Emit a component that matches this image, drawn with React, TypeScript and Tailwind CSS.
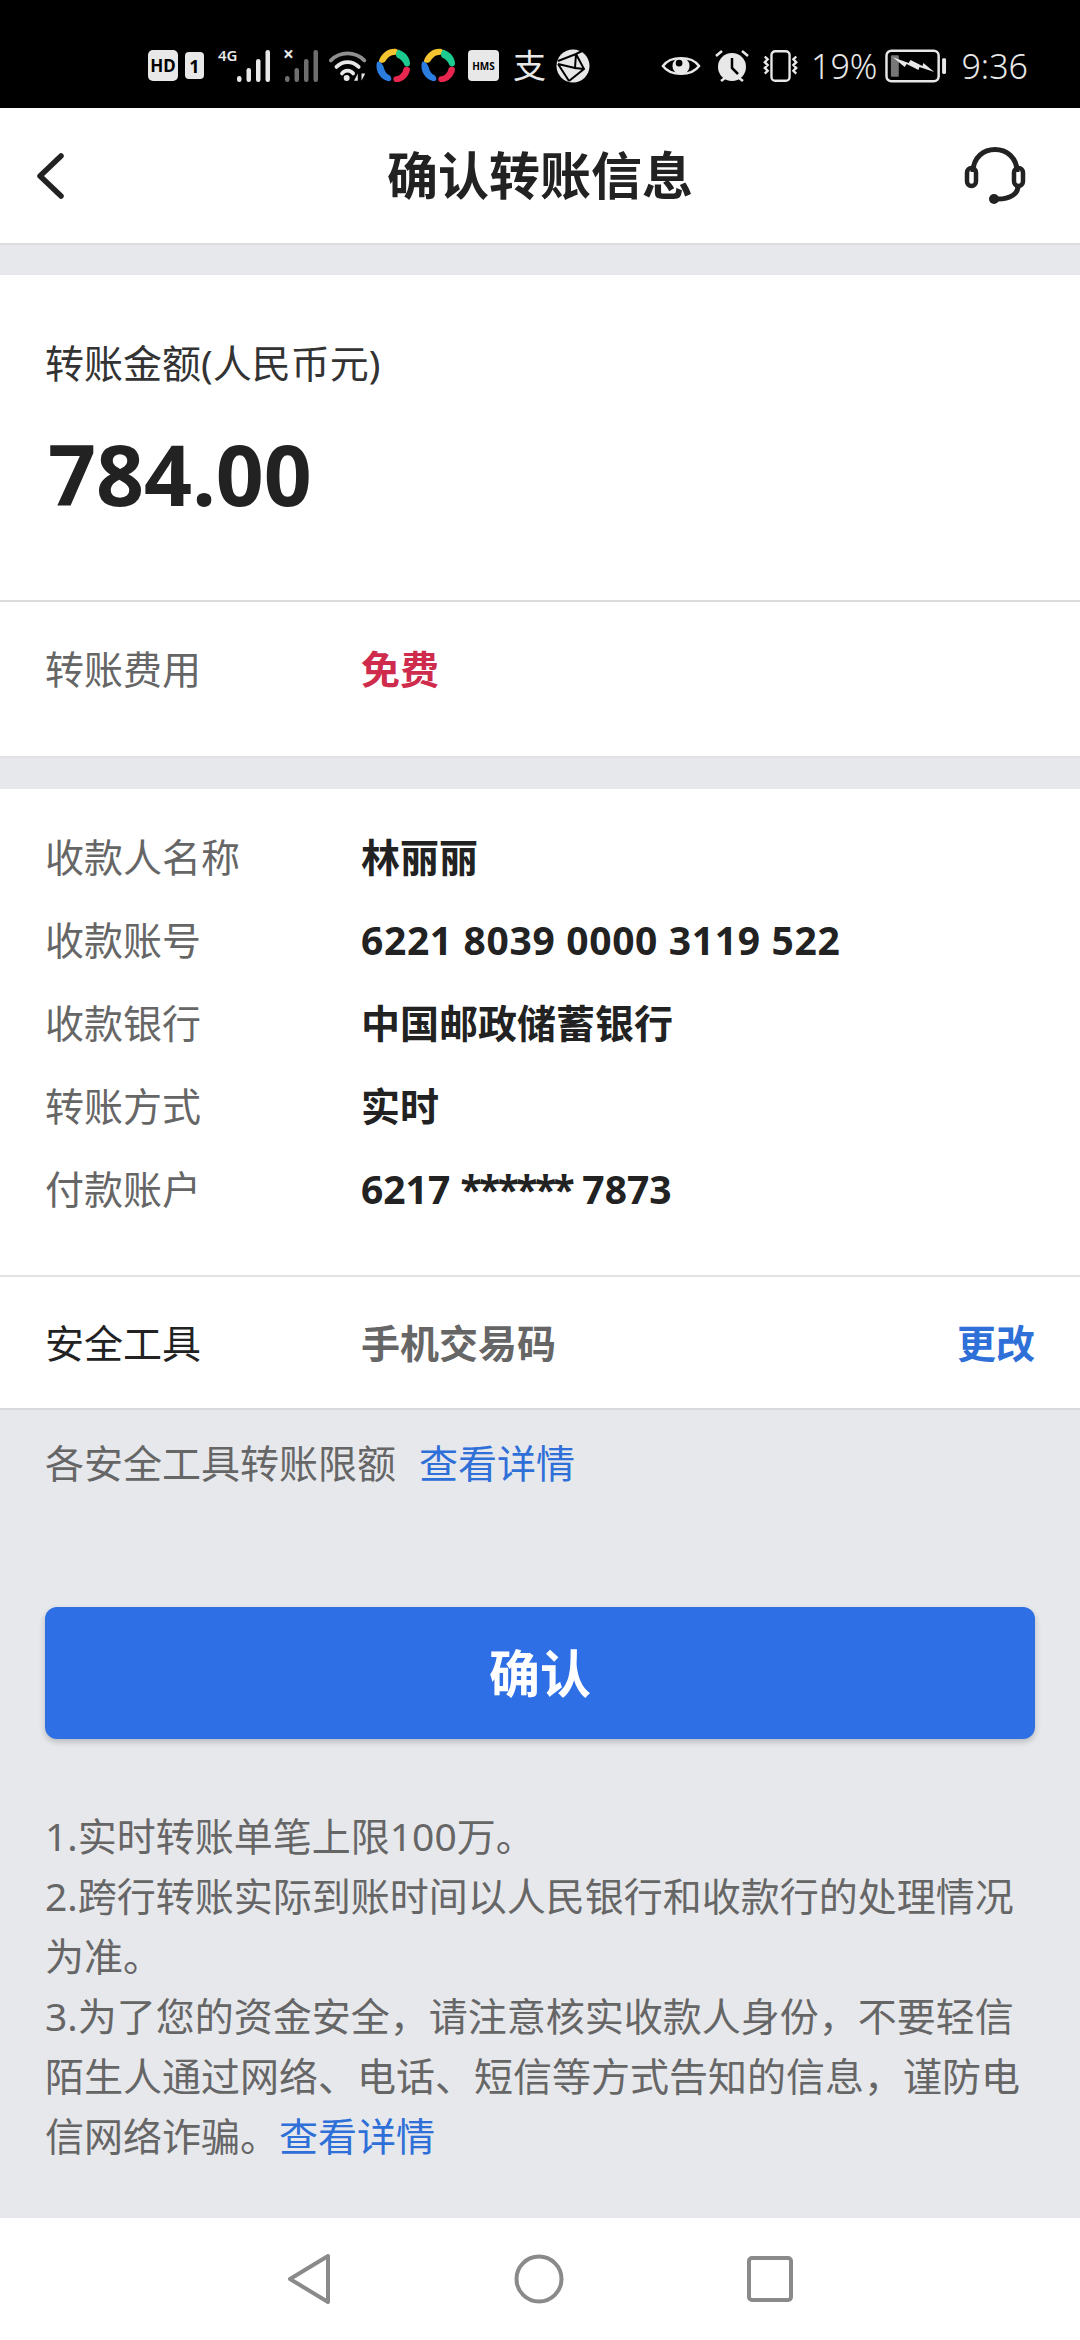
import React from 'react';

const font = { fontFamily: '"Noto Sans", "Noto Sans CJK SC", sans-serif' };
const thin = { fontFamily: '"Noto Sans", sans-serif', fontWeight: 300 };

const details = [
  { label: '收款人名称', value: '林丽丽' },
  { label: '收款账号', value: <span className="tracking-[0.65px]">6221 8039 0000 3119 522</span> },
  { label: '收款银行', value: '中国邮政储蓄银行' },
  { label: '转账方式', value: '实时' },
  { label: '付款账户', value: <>6217 <span className="tracking-[-2.5px]">******</span> 7873</> },
];

function Bars({ color }: { color: string }) {
  const heights = [6, 14, 23, 32];
  return (
    <svg width="36" height="34" viewBox="0 0 36 34" className="block">
      {heights.map((h, i) => (
        <rect key={i} x={2 + i * 9.5} y={33 - h} width="4.5" height={h} rx="2.2" fill={color} />
      ))}
    </svg>
  );
}

function HuaweiBall() {
  return (
    <svg width="35" height="35" viewBox="0 0 36 36" className="block">
      <path d="M3 13C6 5 13 0 21 1c3 1 2 5-1 6-5 0-8 3-10 6-2 3-7 3-7 0z" fill="#f4c430" />
      <path d="M24 2c6 2 11 8 11 14 0 4-5 4-6 1-1-3-4-6-7-7-3-2-1-9 2-8z" fill="#1cc98f" />
      <path d="M35 22c-1 7-7 13-14 13-4 0-4-5-1-6 4 0 7-3 8-7 1-4 7-3 7 0z" fill="#e8264f" />
      <path d="M1 15c-2 7 2 16 11 19 4 1 5-3 2-6-3-1-5-4-6-8-1-4-6-8-7-5z" fill="#2b7de0" />
    </svg>
  );
}

function StatusBar() {
  return (
    <div className="h-[108px] bg-black flex items-end pb-[25px] pl-[148px] pr-[52px] text-[#e8e8e8]">
      <div className="flex items-center">
        <div className="w-[30px] h-[31px] bg-[#e8e8e8] rounded-[5px] text-black text-[17px] font-bold flex items-center justify-center leading-none">HD</div>
        <div className="w-[19px] h-[27px] ml-[7px] bg-[#e8e8e8] rounded-[4px] text-black text-[18px] font-bold flex items-center justify-center leading-none">1</div>
        <div className="relative w-[53px] h-[34px] ml-[14px]">
          <span className="absolute left-0 top-[-3px] text-[15px] font-semibold leading-[18px]">4G</span>
          <div className="absolute left-[17px] top-0"><Bars color="#e8e8e8" /></div>
        </div>
        <div className="relative w-[34px] h-[34px] ml-[12px]">
          <div className="absolute left-0 top-0"><Bars color="#6f6f6f" /></div>
          <span className="absolute left-0 top-[-4px] text-[19px] font-bold leading-[18px]">×</span>
        </div>
        <svg width="39" height="34" viewBox="0 0 42 34" className="ml-[12px] block">
          <path d="M2 11C12 1 28 1 38 11" fill="none" stroke="#8f8f8f" strokeWidth="4" strokeLinecap="round" />
          <path d="M8 18C15 11 25 11 32 18" fill="none" stroke="#e8e8e8" strokeWidth="4" strokeLinecap="round" />
          <path d="M14 25C17 21 23 21 26 25" fill="none" stroke="#e8e8e8" strokeWidth="4" strokeLinecap="round" />
          <circle cx="19" cy="30" r="3.2" fill="#e8e8e8" />
          <path d="M31 33v-8l-4 8zM35 25v8l4-8z" fill="#e8e8e8" />
        </svg>
        <div className="ml-[8px]"><HuaweiBall /></div>
        <div className="ml-[10px]"><HuaweiBall /></div>
        <div className="w-[31px] h-[31px] ml-[12px] bg-[#e8e8e8] rounded-[4px] text-black text-[10px] font-bold flex items-center justify-center leading-none">HMS</div>
        <span className="ml-[14px] text-[33px] leading-[34px] w-[33px]" style={font}>支</span>
        <svg width="34" height="34" viewBox="0 0 34 34" className="ml-[10px] block">
          <circle cx="17" cy="17" r="16.5" fill="#e8e8e8" />
          <path d="M2 12L20 5l8 15-15 12M20 5l6-3M20 5l-1 14-17-4M19 19l9 1M13 32L2 15" fill="none" stroke="#000" strokeWidth="2" />
        </svg>
      </div>
      <div className="flex items-center ml-auto">
        <svg width="40" height="28" viewBox="0 0 42 28" className="block">
          <path d="M2 14C10 3 32 3 40 14C32 25 10 25 2 14z" fill="none" stroke="#e8e8e8" strokeWidth="2.5" />
          <circle cx="21" cy="14" r="9" fill="#e8e8e8" />
          <circle cx="19" cy="11" r="3.5" fill="#000" />
        </svg>
        <svg width="36" height="34" viewBox="0 0 36 34" className="ml-[13px] block">
          <circle cx="18" cy="18" r="14" fill="#e8e8e8" />
          <path d="M18 9v10l6 6" fill="none" stroke="#000" strokeWidth="2.5" />
          <path d="M2 7l6-5M34 7l-6-5M7 32l4-3M29 32l-4-3" stroke="#e8e8e8" strokeWidth="2.5" />
        </svg>
        <svg width="40" height="34" viewBox="0 0 42 34" className="ml-[11px] block">
          <rect x="11" y="1.5" width="19" height="31" rx="4" fill="none" stroke="#e8e8e8" strokeWidth="2.5" />
          <path d="M4 7l3 3-3 3 3 3-3 3 3 3-3 3M37 7l-3 3 3 3-3 3 3 3-3 3 3 3" fill="none" stroke="#e8e8e8" strokeWidth="2.5" />
        </svg>
        <span className="ml-[10px] text-[34px] leading-[34px]" style={thin}>19%</span>
        <svg width="63" height="34" viewBox="0 0 64 34" className="ml-[8px] block">
          <rect x="1.5" y="1.5" width="53" height="31" rx="5" fill="none" stroke="#e8e8e8" strokeWidth="2.5" />
          <rect x="6" y="6" width="8" height="22" rx="1" fill="#777" />
          <path d="M8 8l16 6 2-3 12 6 1-3 11 9-15-5-1 3-12-6-2 3z" fill="#e8e8e8" />
          <rect x="58" y="9" width="4" height="16" rx="1.5" fill="#e8e8e8" />
        </svg>
        <span className="ml-[13px] text-[34px] leading-[34px]" style={thin}>9:36</span>
      </div>
    </div>
  );
}

export default function App() {
  return (
    <div className="w-[1080px] h-[2340px] bg-[#e7e8ec] flex flex-col overflow-hidden" style={font}>
      <StatusBar />

      <div className="h-[137px] bg-white border-b-2 border-[#dcdcdc] flex items-center justify-between pl-[34px] pr-[54px] relative">
        <svg width="32" height="48" viewBox="0 0 32 48" className="block">
          <path d="M27 4L6 24l21 20" fill="none" stroke="#222" strokeWidth="5.5" strokeLinecap="round" strokeLinejoin="round" />
        </svg>
        <h1 className="text-[51px] font-bold text-[#222] leading-none absolute left-0 right-0 text-center">确认转账信息</h1>
        <svg width="62" height="60" viewBox="0 0 62 60" className="block">
          <path d="M9 26C9 -4 53 -4 53 26" fill="none" stroke="#222" strokeWidth="5" />
          <rect x="3" y="22" width="9" height="18" rx="4.5" fill="none" stroke="#222" strokeWidth="4.5" />
          <rect x="50" y="22" width="9" height="18" rx="4.5" fill="none" stroke="#222" strokeWidth="4.5" />
          <path d="M54 40c0 8-8 13-20 13" fill="none" stroke="#222" strokeWidth="5" />
          <circle cx="30" cy="53" r="5" fill="#222" />
        </svg>
      </div>

      <div className="h-[30px]" />

      <div className="bg-white">
        <div className="h-[327px] pl-[45px] border-b-2 border-[#dcdcdc]">
          <p className="pt-[63px] text-[39px] leading-[50px] text-[#333]">转账金额(人民币元)</p>
          <p className="mt-[31px] ml-[3px] text-[84px] leading-[110px] font-bold text-[#222]">784.00</p>
        </div>
        <div className="h-[156px] flex items-center pb-[20px] pl-[45px] border-b-2 border-[#e2e2e2]">
          <span className="w-[316px] text-[39px] leading-[50px] text-[#666]">转账费用</span>
          <span className="text-[39px] leading-[50px] font-bold text-[#cf2c4d]">免费</span>
        </div>
      </div>

      <div className="h-[31px]" />

      <div className="bg-white">
        <div className="h-[488px] pt-[26px] pl-[45px] border-b-2 border-[#e2e2e2]">
          {details.map((row) => (
            <div key={row.label} className="h-[83px] flex items-center">
              <span className="w-[316px] text-[39px] leading-[50px] text-[#666]">{row.label}</span>
              <span className="text-[39px] leading-[50px] font-bold text-[#222]">{row.value}</span>
            </div>
          ))}
        </div>
        <div className="h-[133px] flex items-center pl-[45px] pr-[45px] border-b-2 border-[#d9d9dc]">
          <span className="w-[316px] text-[39px] leading-[50px] text-[#222]">安全工具</span>
          <span className="text-[39px] leading-[50px] font-bold text-[#666]">手机交易码</span>
          <span className="ml-auto text-[39px] leading-[50px] font-bold text-[#2e6fd8]">更改</span>
        </div>
      </div>

      <div className="px-[45px] flex flex-col flex-1">
        <p className="mt-[25px] h-[56px] text-[39px] leading-[56px] text-[#666]">
          各安全工具转账限额<span className="ml-[23px] text-[#2e6fd8]">查看详情</span>
        </p>
        <button className="mt-[116px] h-[132px] w-full rounded-[12px] bg-[#2e6fe6] shadow-[0_3px_6px_rgba(0,0,0,0.2)] text-white text-[51px] font-bold leading-none">确认</button>
        <div className="mt-[67px] text-[39px] leading-[60px] text-[#666]">
          <p>1.实时转账单笔上限100万。</p>
          <p>2.跨行转账实际到账时间以人民银行和收款行的处理情况为准。</p>
          <p>3.为了您的资金安全，请注意核实收款人身份，不要轻信陌生人通过网络、电话、短信等方式告知的信息，谨防电信网络诈骗。<span className="text-[#2e6fd8]">查看详情</span></p>
        </div>
      </div>

      <div className="h-[122px] bg-white flex items-center justify-center gap-[183px] shrink-0">
        <svg width="44" height="50" viewBox="0 0 44 50" className="block">
          <path d="M41 2L3 25l38 23z" fill="none" stroke="#8a8a8a" strokeWidth="4" strokeLinejoin="round" />
        </svg>
        <svg width="50" height="50" viewBox="0 0 50 50" className="block">
          <circle cx="25" cy="25" r="22.5" fill="none" stroke="#8a8a8a" strokeWidth="4" />
        </svg>
        <svg width="46" height="46" viewBox="0 0 46 46" className="block">
          <rect x="2" y="2" width="42" height="42" rx="3" fill="none" stroke="#8a8a8a" strokeWidth="4" />
        </svg>
      </div>
    </div>
  );
}
